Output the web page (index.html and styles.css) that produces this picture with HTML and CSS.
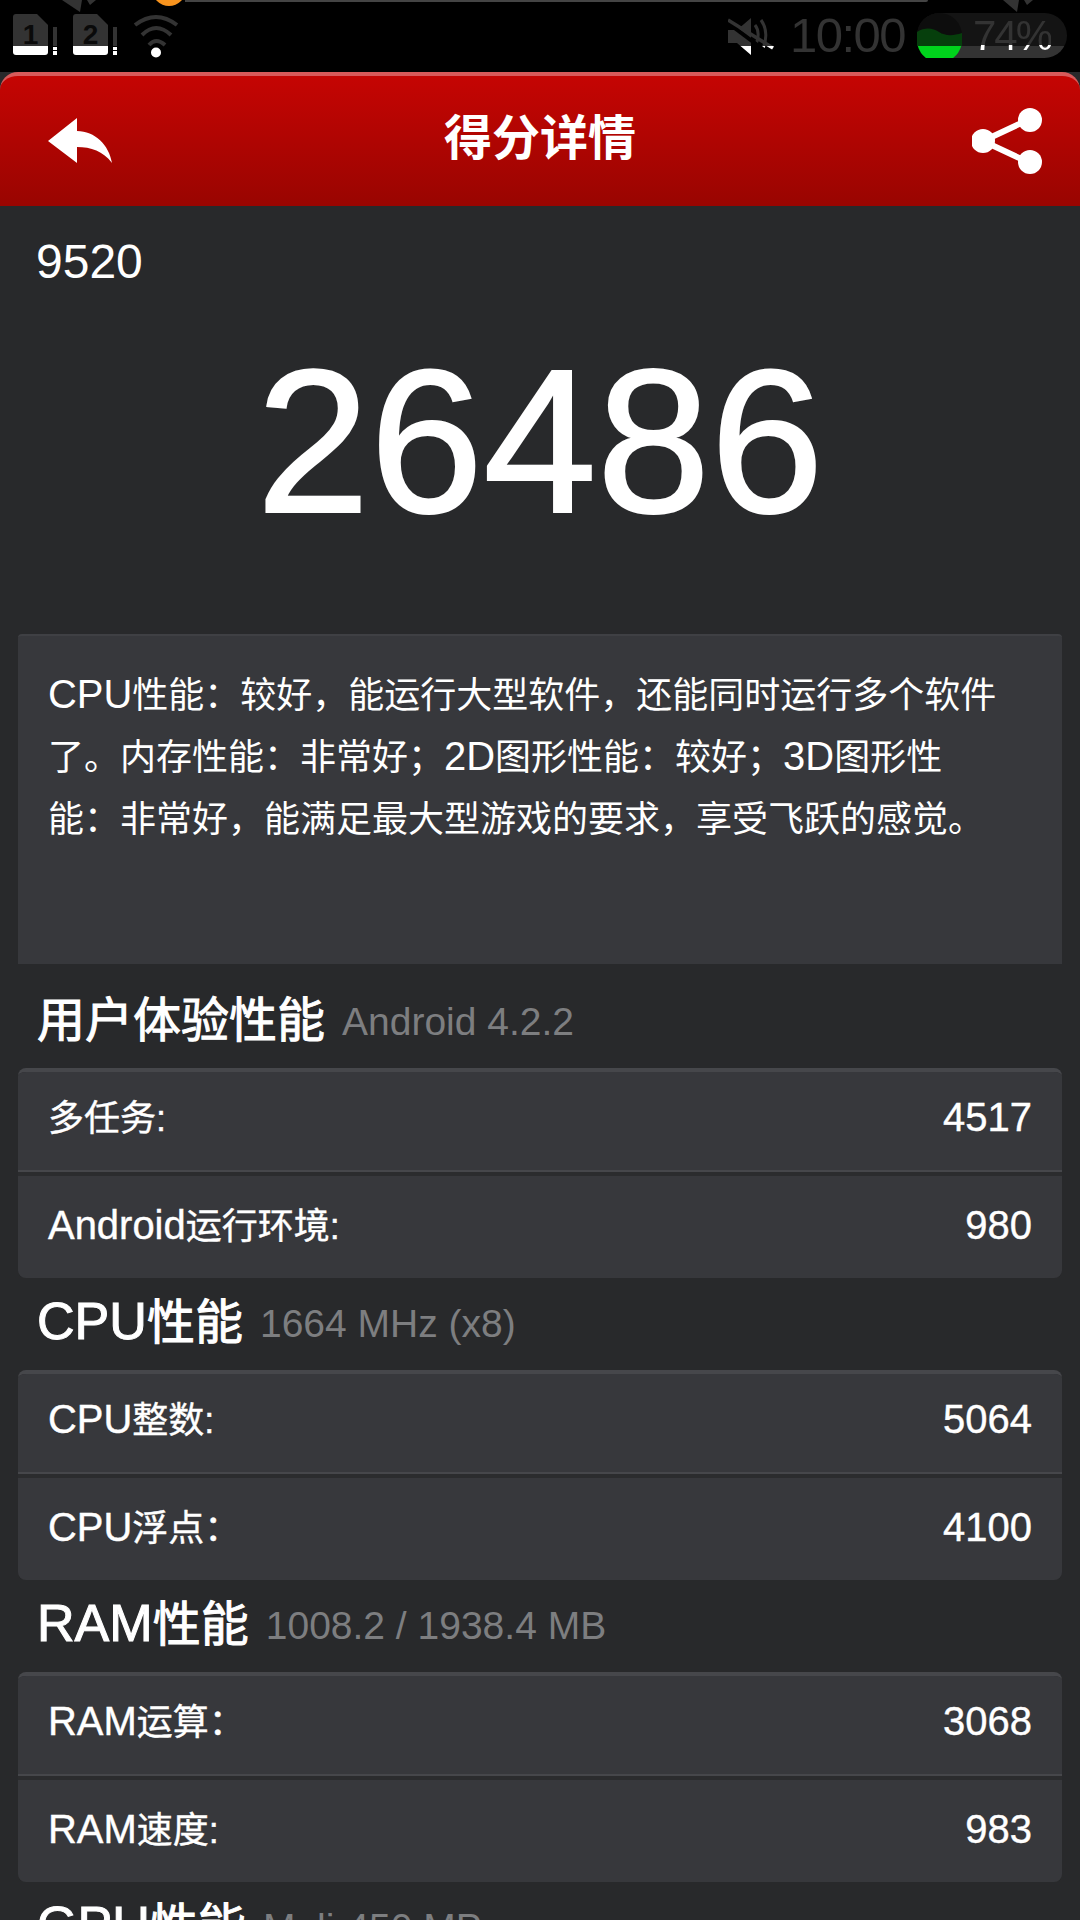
FILE: index.html
```html
<!DOCTYPE html>
<html lang="zh-CN">

<head>
  <meta charset="UTF-8" />
  <title>得分详情</title>
  <link rel="stylesheet" href="styles.css">
</head>

<body>
  <div class="screen">
    <div class="statusbar">
      <span class="peek-dot"></span>
      <span class="peek-line"></span>
      <svg class="peek-ghost ghost-left" width="34" height="13" viewBox="0 0 34 13">
        <path d="M0 0l18 12L20 0zM25 0l3 5 6-5z" fill="#333" />
      </svg>
      <svg class="peek-ghost ghost-right" width="34" height="13" viewBox="0 0 34 13">
        <path d="M0 0l14 12L16 0zM21 0l3 5 6-5z" fill="#333" />
      </svg>
      <div class="status-left">
        <div class="sim">
          <svg width="46" height="46" viewBox="0 0 46 46">
            <path d="M0 5a3 3 0 0 1 3-3h21l11 11v27a3 3 0 0 1-3 3H3a3 3 0 0 1-3-3z" fill="url(#band)" />
            <rect x="40" y="15" width="4" height="19" fill="#333" />
            <rect x="40" y="35" width="4" height="3" fill="#fff" />
            <rect x="40" y="39" width="4" height="4" fill="#fff" />
          </svg>
          <span class="sim-num">1</span>
        </div>
        <div class="sim">
          <svg width="46" height="46" viewBox="0 0 46 46">
            <path d="M0 5a3 3 0 0 1 3-3h21l11 11v27a3 3 0 0 1-3 3H3a3 3 0 0 1-3-3z" fill="url(#band)" />
            <rect x="40" y="15" width="4" height="19" fill="#333" />
            <rect x="40" y="35" width="4" height="3" fill="#fff" />
            <rect x="40" y="39" width="4" height="4" fill="#fff" />
          </svg>
          <span class="sim-num">2</span>
        </div>
        <svg width="46" height="46" viewBox="0 0 46 46" fill="none" stroke="#333" stroke-width="4">
          <path d="M2 13Q23-3 44 13" />
          <path d="M9 23Q23 9 38 23" />
          <path d="M16 33Q23 25 32 33" />
          <circle cx="23" cy="40.5" r="5" fill="#fff" stroke="none" />
        </svg>
      </div>
      <div class="status-right">
        <svg class="mute" width="46" height="46" viewBox="0 0 46 46">
          <path d="M0 18h9L23 6v37L9 31H0z" fill="url(#band)" />
          <path d="M27 13c4 5 4 13 1 19M33 8c6 8 6 20 2 28" fill="none" stroke="url(#band)" stroke-width="3" />
          <path d="M0 11l40 30" stroke="#000" stroke-width="4" />
          <path d="M0 8l45 28" stroke="url(#band)" stroke-width="3.5" />
        </svg>
        <span class="clock">10:00</span>
        <div class="battery">
          <svg width="45" height="45" viewBox="0 0 45 45">
            <circle cx="22.500" cy="22.500" r="22.500" fill="#0d0d0d" />
            <path d="M0 33V19c8-5 16-4 22 0s14 4 23 1v13z" fill="#063f0c" />
            <path d="M0.800 33H44.200A22.500 22.500 0 0 1 0.800 33z" fill="#00d31c" />
          </svg>
          <span class="battery-text">74%</span>
        </div>
      </div>
    </div>

    <div class="titlebar">
      <svg width="66" height="48" viewBox="0 0 66 48">
        <path d="M1 24L30 1v13c18 0 32 14 35 32C56 34 44 30 30 30v16z" fill="#fff" />
      </svg>
      <h1>得分详情</h1>
      <svg width="72" height="66" viewBox="0 0 72 66">
        <path d="M11 33L58 11M11 33l47 22" stroke="#fff" stroke-width="6" />
        <circle cx="11" cy="33" r="12" fill="#fff" />
        <circle cx="58" cy="12" r="12" fill="#fff" />
        <circle cx="58" cy="54" r="12" fill="#fff" />
      </svg>
    </div>

    <div class="model">9520</div>
    <div class="total">26486</div>

    <div class="summary"><span class="en">CPU</span>性能：较好，能运行大型软件，还能同时运行多个软件了。内存性能：非常好；<span class="en">2D</span>图形性能：较好；<span class="en">3D</span>图形性能：非常好，能满足最大型游戏的要求，享受飞跃的感觉。</div>

    <h2 class="section first">用户体验性能<small>Android 4.2.2</small></h2>
    <div class="group">
      <div class="row"><span>多任务:</span><span class="en">4517</span></div>
      <div class="row"><span><span class="en">Android</span>运行环境:</span><span class="en">980</span></div>
    </div>

    <h2 class="section"><span class="en">CPU</span>性能<small>1664 MHz (x8)</small></h2>
    <div class="group">
      <div class="row"><span><span class="en">CPU</span>整数:</span><span class="en">5064</span></div>
      <div class="row"><span><span class="en">CPU</span>浮点：</span><span class="en">4100</span></div>
    </div>

    <h2 class="section"><span class="en">RAM</span>性能<small>1008.2 / 1938.4 MB</small></h2>
    <div class="group">
      <div class="row"><span><span class="en">RAM</span>运算：</span><span class="en">3068</span></div>
      <div class="row"><span><span class="en">RAM</span>速度:</span><span class="en">983</span></div>
    </div>

    <h2 class="section"><span class="en">GPU</span>性能<small>Mali-450 MP</small></h2>
  </div>

  <svg class="defs" width="0" height="0">
    <defs>
      <linearGradient id="band" x1="0" y1="0" x2="0" y2="46" gradientUnits="userSpaceOnUse">
        <stop offset="0.74" stop-color="#333" />
        <stop offset="0.74" stop-color="#fff" />
      </linearGradient>
    </defs>
  </svg>
</body>

</html>
```

FILE: styles.css
```css
body {
  margin: 0;
  background: #28292b;
  color: #fff;
  font-family: "Liberation Sans", "Noto Sans CJK SC", sans-serif;
}

.screen {
  width: 1080px;
  height: 1920px;
  overflow: hidden;
  position: relative;
}

.defs {
  position: absolute;
}

.en {
  font-size: 1.11em;
  line-height: 1;
}

/* status bar */
.statusbar {
  height: 72px;
  background: #000;
  display: flex;
  justify-content: space-between;
  position: relative;
  overflow: hidden;
}

.peek-dot {
  position: absolute;
  left: 152px;
  top: -28px;
  width: 34px;
  height: 34px;
  border-radius: 50%;
  background: #f7931e;
}

.peek-line {
  position: absolute;
  left: 185px;
  top: 0;
  width: 743px;
  height: 2px;
  background: #444;
  border-radius: 0 0 4px 0;
}

.peek-ghost {
  position: absolute;
  top: 0;
}

.ghost-left {
  left: 62px;
}

.ghost-right {
  left: 1003px;
}

.status-left {
  display: flex;
  gap: 14px;
  padding: 12px 0 0 13px;
}

.sim {
  position: relative;
  width: 46px;
  height: 46px;
}

.sim-num {
  position: absolute;
  left: 0;
  top: 6px;
  width: 35px;
  text-align: center;
  font-size: 28px;
  line-height: 34px;
  font-weight: bold;
  color: #0a0a0a;
}

.status-right {
  display: flex;
  padding: 12px 13px 0 0;
}

.mute {
  margin-right: 16px;
}

.clock,
.battery-text {
  color: transparent;
  background: linear-gradient(#333 72%, #fff 72%);
  -webkit-background-clip: text;
  background-clip: text;
}

.clock {
  font-size: 49px;
  line-height: 46px;
  letter-spacing: -1.5px;
  margin-right: 12px;
}

.battery {
  width: 150px;
  height: 45px;
  margin-top: 1px;
  border-radius: 23px;
  background: linear-gradient(#141414 73%, #333 73%);
  display: flex;
}

.battery-text {
  margin-left: 11px;
  font-size: 42px;
  line-height: 45px;
  height: 45px;
  letter-spacing: -2px;
  background: linear-gradient(#333 71%, #fff 71%);
  -webkit-background-clip: text;
  background-clip: text;
}

/* title */
.titlebar {
  height: 134px;
  box-sizing: border-box;
  border-top: 4px solid #d85a5a;
  border-radius: 18px 18px 0 0;
  background: linear-gradient(#c50503, #990501);
  display: flex;
  align-items: center;
  justify-content: space-between;
  padding: 0 36px 0 47px;
  position: relative;
}

.titlebar h1 {
  position: absolute;
  left: 0;
  right: 0;
  margin: 0;
  padding-bottom: 14px;
  text-align: center;
  font-size: 48px;
  font-weight: bold;
}

/* score */
.model {
  font-size: 48px;
  line-height: 56px;
  padding: 28px 0 0 36px;
}

.total {
  font-size: 204px;
  line-height: 230px;
  text-align: center;
  margin-top: 36px;
  height: 308px;
  -webkit-text-stroke: 2px #fff;
}

.summary {
  margin: 0 18px;
  height: 330px;
  box-sizing: border-box;
  padding: 29px 60px 0 30px;
  background: #37383c;
  border-top: 2px solid #3f4044;
  border-radius: 4px 4px 0 0;
  font-size: 36px;
  line-height: 62px;
}

/* sections */
.section {
  margin: 0;
  height: 92px;
  box-sizing: border-box;
  padding: 15px 0 0 37px;
  font-size: 48px;
  line-height: 60px;
  font-weight: normal;
  -webkit-text-stroke: 1px #fff;
}

.section .en {
  font-size: 1.085em;
}

.section.first {
  margin-top: 12px;
}

.section small {
  margin-left: 17px;
  font-size: 39px;
  vertical-align: 2px;
  color: #7d7e80;
  -webkit-text-stroke: 0;
}

.group {
  margin: 0 18px;
  border-radius: 8px;
  overflow: hidden;
  border-top: 4px solid #46474b;
  background: #2b2c2e;
}

.row {
  height: 100px;
  box-sizing: border-box;
  background: #37383c;
  display: flex;
  justify-content: space-between;
  align-items: baseline;
  padding: 19px 30px 0 30px;
  font-size: 36px;
  line-height: 56px;
  border-bottom: 2px solid #46474b;
  -webkit-text-stroke: 0.4px #fff;
}

.row + .row {
  height: 102px;
  margin-top: 4px;
  padding-top: 23px;
  border-bottom: 0;
}
```
